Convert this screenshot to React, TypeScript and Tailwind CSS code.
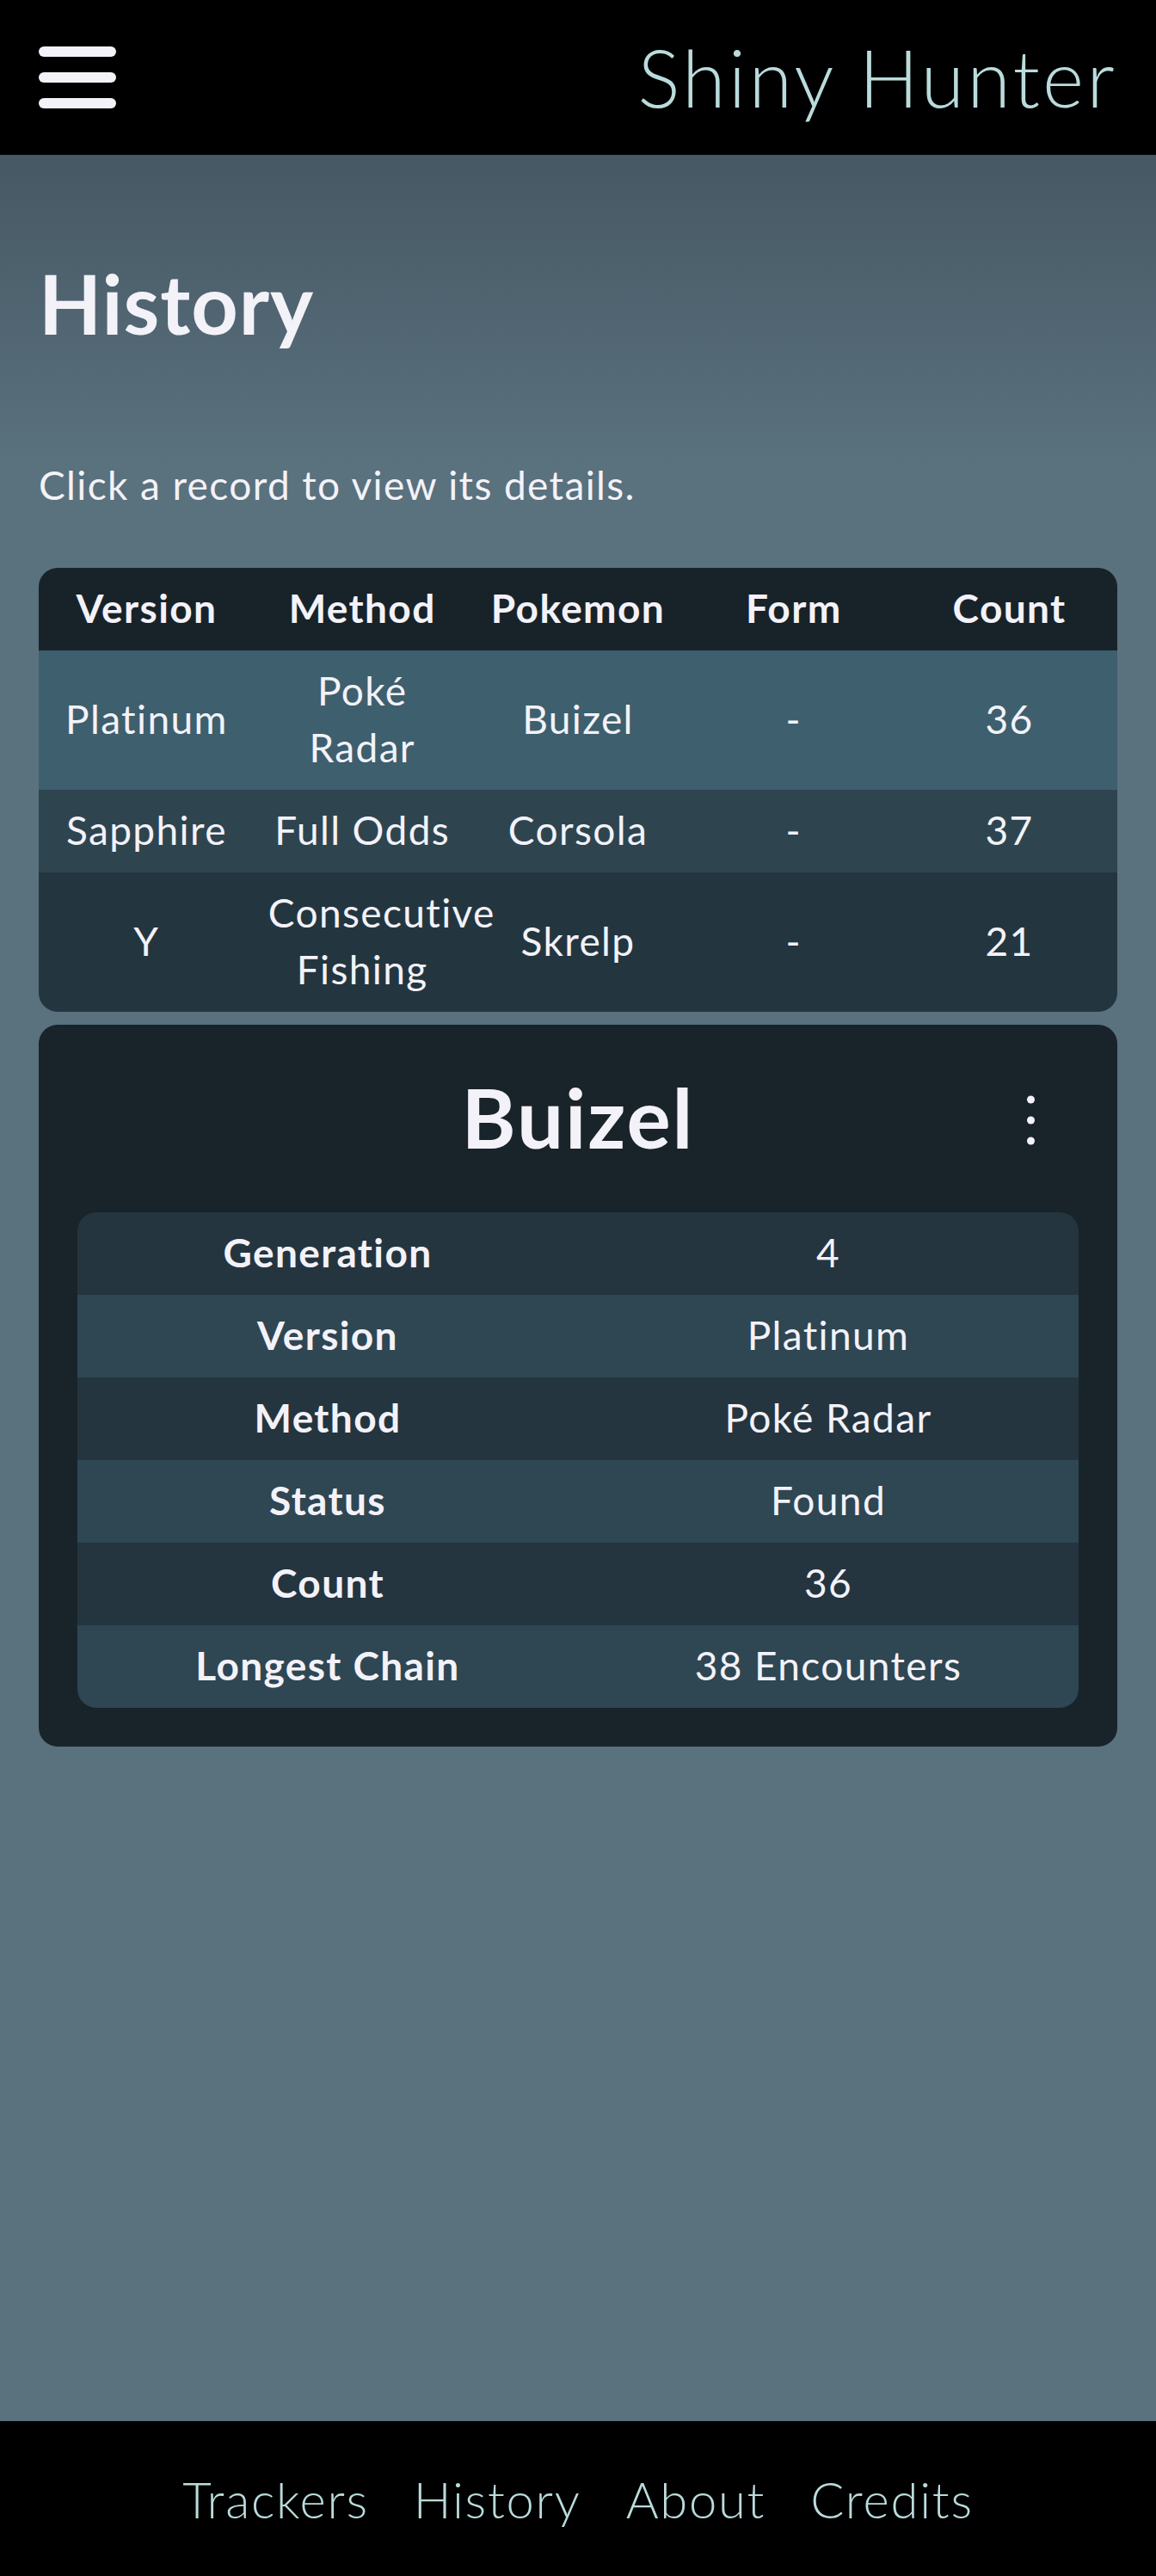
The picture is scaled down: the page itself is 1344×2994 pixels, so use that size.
import { useState } from "react";

type HuntRecord = {
  version: string;
  method: string;
  pokemon: string;
  form: string;
  count: number;
  generation: number;
  status: string;
  longestChain: string;
};

const records: HuntRecord[] = [
  {
    version: "Platinum",
    method: "Poké Radar",
    pokemon: "Buizel",
    form: "-",
    count: 36,
    generation: 4,
    status: "Found",
    longestChain: "38 Encounters",
  },
  {
    version: "Sapphire",
    method: "Full Odds",
    pokemon: "Corsola",
    form: "-",
    count: 37,
    generation: 3,
    status: "Found",
    longestChain: "-",
  },
  {
    version: "Y",
    method: "Consecutive Fishing",
    pokemon: "Skrelp",
    form: "-",
    count: 21,
    generation: 6,
    status: "Found",
    longestChain: "21 Encounters",
  },
];

// striped rows, the selected one gets its own colour
const rowColors = ["bg-[#233640]", "bg-[#2e4550]"];

function Header() {
  return (
    <header className="flex h-[180px] items-center justify-between bg-black px-[45px]">
      <button className="flex w-[90px] flex-col gap-[18px]" aria-label="Open menu">
        <span className="h-[12px] w-full rounded-full bg-[#f3f2f8]" />
        <span className="h-[12px] w-full rounded-full bg-[#f3f2f8]" />
        <span className="h-[12px] w-full rounded-full bg-[#f3f2f8]" />
      </button>
      <h1 className="text-[92px] font-light leading-none tracking-[0.035em] text-[#badbdc]">
        Shiny Hunter
      </h1>
    </header>
  );
}

function RecordTable({
  selected,
  onSelect,
}: {
  selected: number;
  onSelect: (i: number) => void;
}) {
  return (
    <div className="overflow-hidden rounded-[22px]">
      <table className="w-full table-fixed text-center text-[46px] leading-[66px] tracking-[0.03em] text-[#f3f2f8]">
        <thead className="bg-[#182329]">
          <tr>
            {["Version", "Method", "Pokemon", "Form", "Count"].map((h) => (
              <th key={h} className="px-[16px] pb-[16px] pt-[14px] font-bold">
                {h}
              </th>
            ))}
          </tr>
        </thead>
        <tbody>
          {records.map((r, i) => (
            <tr
              key={r.pokemon}
              onClick={() => onSelect(i)}
              className={`cursor-pointer ${i === selected ? "bg-[#3e5f6e]" : rowColors[i % 2]}`}
            >
              <td className="px-[16px] pb-[16px] pt-[14px]">{r.version}</td>
              <td className="px-[16px] pb-[16px] pt-[14px]">{r.method}</td>
              <td className="px-[16px] pb-[16px] pt-[14px]">{r.pokemon}</td>
              <td className="px-[16px] pb-[16px] pt-[14px]">{r.form}</td>
              <td className="px-[16px] pb-[16px] pt-[14px]">{r.count}</td>
            </tr>
          ))}
        </tbody>
      </table>
    </div>
  );
}

function DetailCard({ record }: { record: HuntRecord }) {
  const rows: [string, string][] = [
    ["Generation", String(record.generation)],
    ["Version", record.version],
    ["Method", record.method],
    ["Status", record.status],
    ["Count", String(record.count)],
    ["Longest Chain", record.longestChain],
  ];

  return (
    <div className="rounded-[22px] bg-[#19242a] p-[45px] pt-[49px]">
      <div className="relative mb-[54px]">
        <h2 className="text-center text-[96px] font-bold leading-[1.2] tracking-[0.02em] text-[#f3f2f8]">
          {record.pokemon}
        </h2>
        <button
          aria-label="More options"
          className="absolute right-[43px] top-1/2 mt-[4px] flex -translate-y-1/2 flex-col items-center gap-[15px] p-[8px]"
        >
          <span className="h-[9px] w-[9px] rounded-full bg-[#f3f2f8]" />
          <span className="h-[9px] w-[9px] rounded-full bg-[#f3f2f8]" />
          <span className="h-[9px] w-[9px] rounded-full bg-[#f3f2f8]" />
        </button>
      </div>
      <div className="overflow-hidden rounded-[22px]">
        <table className="w-full table-fixed text-center text-[46px] leading-[66px] tracking-[0.03em] text-[#f3f2f8]">
          <tbody>
            {rows.map(([label, value], i) => (
              <tr key={label} className={i % 2 === 0 ? "bg-[#243540]" : "bg-[#2f4653]"}>
                <th className="px-[16px] pb-[16px] pt-[14px] font-bold">{label}</th>
                <td className="px-[16px] pb-[16px] pt-[14px]">{value}</td>
              </tr>
            ))}
          </tbody>
        </table>
      </div>
    </div>
  );
}

function Footer() {
  return (
    <footer className="flex h-[180px] items-center justify-center gap-[52px] bg-black text-[58px] font-light tracking-[0.03em] text-[#badbdc]">
      <a href="#">Trackers</a>
      <a href="#">History</a>
      <a href="#">About</a>
      <a href="#">Credits</a>
    </footer>
  );
}

export default function App() {
  const [selected, setSelected] = useState(0);

  return (
    <div className="flex min-h-screen flex-col font-['Lato','Noto_Sans',sans-serif]">
      <Header />
      <main className="flex-1 bg-[#5a717e] bg-[linear-gradient(to_bottom,#465864,#5a717e_360px)] px-[45px]">
        <h2 className="mt-[115px] text-[95px] font-bold leading-[1.2] tracking-[0.01em] text-[#f3f2f8]">
          History
        </h2>
        <p className="mt-[122px] text-[46px] leading-[66px] tracking-[0.03em] text-[#f3f2f8]">
          Click a record to view its details.
        </p>
        <div className="mt-[63px] flex flex-col gap-[15px]">
          <RecordTable selected={selected} onSelect={setSelected} />
          <DetailCard record={records[selected]} />
        </div>
      </main>
      <Footer />
    </div>
  );
}
